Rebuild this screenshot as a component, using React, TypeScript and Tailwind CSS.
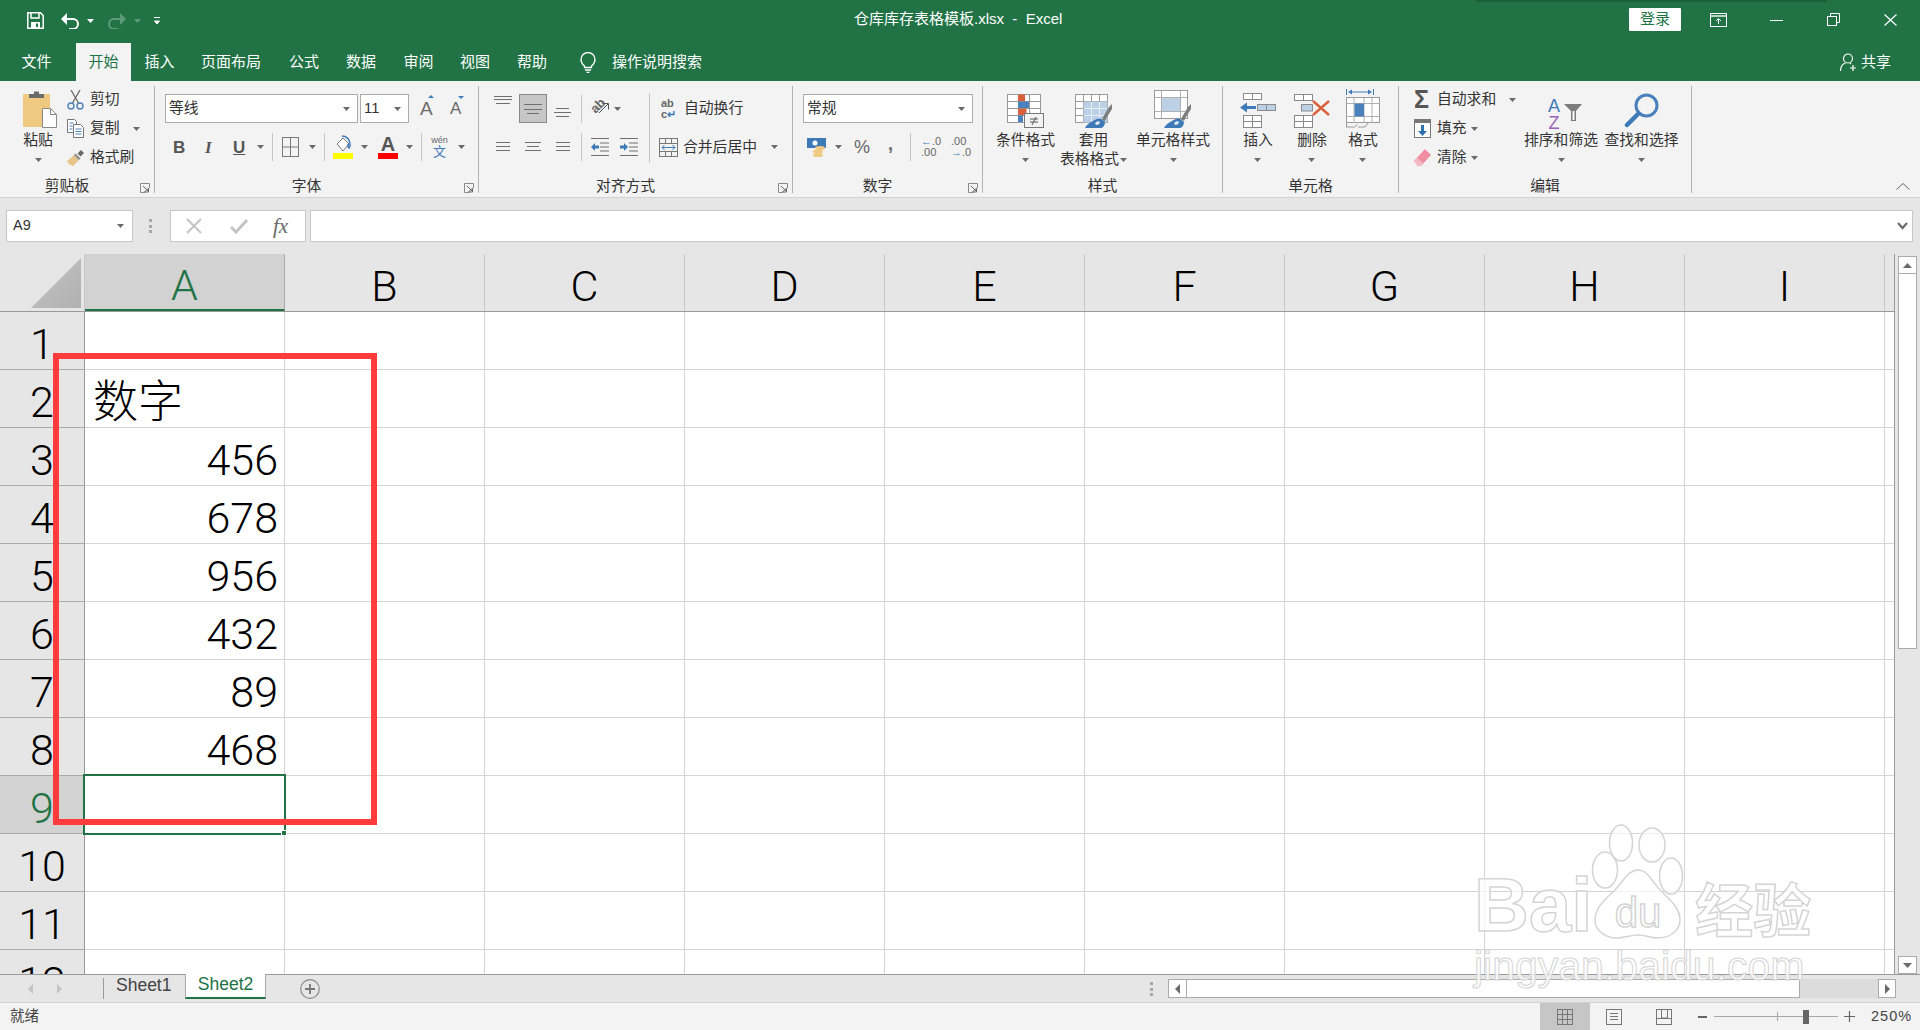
import type { ReactNode } from 'react';

const COLS = ['A', 'B', 'C', 'D', 'E', 'F', 'G', 'H', 'I', ''];
const ROWS: { n: number; text?: string; num?: string }[] = [
  { n: 1 },
  { n: 2, text: '数字' },
  { n: 3, num: '456' },
  { n: 4, num: '678' },
  { n: 5, num: '956' },
  { n: 6, num: '432' },
  { n: 7, num: '89' },
  { n: 8, num: '468' },
  { n: 9 },
  { n: 10 },
  { n: 11 },
  { n: 12 },
];
const TABS = ['文件', '开始', '插入', '页面布局', '公式', '数据', '审阅', '视图', '帮助'];
const TAB_CLASS = [
  'ml-[21px] w-[31px]',
  'ml-[24px] w-[55px] bg-[#f3f3f3] text-[#217346]',
  'ml-[14px] w-[29px]',
  'ml-[28px] w-[58px]',
  'ml-[29px] w-[30px]',
  'ml-[27px] w-[30px]',
  'ml-[28px] w-[29px]',
  'ml-[27px] w-[30px]',
  'ml-[28px] w-[28px]',
];

function Caret({ className = '' }: { className?: string }) {
  return (
    <svg width="7" height="4" viewBox="0 0 7 4" className={`shrink-0 ${className}`}>
      <path d="M0 0h7L3.5 4z" fill="#6a6a6a" />
    </svg>
  );
}

function Launcher() {
  return (
    <svg width="10" height="10" viewBox="0 0 10 10" className="absolute right-[4px] bottom-0">
      <path d="M9.5 5V.5H.5v9H5" fill="none" stroke="#8a8a8a" />
      <path d="M3 3l5 5M8.5 5v4h-4z" fill="none" stroke="#6a6a6a" />
    </svg>
  );
}

function Sep({ className = 'h-[28px]' }: { className?: string }) {
  return <div className={`w-px bg-[#c6c6c6] shrink-0 ${className}`} />;
}

function Group({ w, label, launcher, children }: { w: string; label: string; launcher?: boolean; children: ReactNode }) {
  return (
    <div className={`${w} shrink-0 h-[107px] border-r border-[#b4b4b4] flex flex-col`}>
      <div className="h-[92px]">{children}</div>
      <div className={`relative h-[15px] flex items-center justify-center text-[#333] ${launcher ? 'pr-[20px]' : ''}`}>
        <span className="mt-[2px]">{label}</span>
        {launcher && <Launcher />}
      </div>
    </div>
  );
}

function BigBtn({ icon, lines, className = '' }: { icon: ReactNode; lines: ReactNode; className?: string }) {
  return (
    <div className={`flex flex-col items-center shrink-0 ${className}`}>
      <div className="h-[42px] flex items-end justify-center">{icon}</div>
      <div className="mt-[3px] leading-[19px] text-[#333] whitespace-nowrap text-center flex flex-col items-center">{lines}</div>
    </div>
  );
}

function Select({ w, text }: { w: string; text: string }) {
  return (
    <div className={`${w} h-[29px] bg-white border border-[#ababab] flex items-center justify-between pl-[3px] pr-[7px] shrink-0 text-[#333]`}>
      <span>{text}</span>
      <Caret />
    </div>
  );
}

function Lines({ w, offs }: { w: number; offs: [number, number][] }) {
  return (
    <svg width={w} height="24" viewBox={`0 0 ${w} 24`} className="shrink-0">
      {offs.map(([x, y], i) => (
        <rect key={i} x={x} y={y} width={w - 2 * x} height="1" fill="#6f6f6f" />
      ))}
    </svg>
  );
}

function MiniGrid({ x, y, cols, rows, cw, ch, stroke = '#9a9a9a' }: { x: number; y: number; cols: number; rows: number; cw: number; ch: number; stroke?: string }) {
  const out = [];
  for (let r = 0; r < rows; r++) {
    for (let c = 0; c < cols; c++) {
      out.push(<rect key={`${r}-${c}`} x={x + c * cw + 0.5} y={y + r * ch + 0.5} width={cw} height={ch} fill="#fff" stroke={stroke} />);
    }
  }
  return <>{out}</>;
}

function PasteIcon() {
  return (
    <svg width="34" height="38" viewBox="0 0 34 38">
      <rect x="0" y="4" width="27" height="33" rx="1" fill="#f0c981" />
      <path d="M6 8V4h5V1.5h5V4h5v4z" fill="#6b6b6b" />
      <path d="M19.5 18.5h8l6 6v13h-14z" fill="#fff" stroke="#8a8a8a" />
      <path d="M27.5 18.5v6h6" fill="none" stroke="#8a8a8a" />
    </svg>
  );
}

function ScissorsIcon() {
  return (
    <svg width="17" height="20" viewBox="0 0 17 20" fill="none">
      <path d="M4 0l7.5 13M13 0L5.5 13" stroke="#6f6f6f" strokeWidth="1.4" />
      <circle cx="4" cy="16" r="3" stroke="#4d82b8" strokeWidth="1.4" />
      <circle cx="13" cy="16" r="3" stroke="#4d82b8" strokeWidth="1.4" />
    </svg>
  );
}

function CopyIcon() {
  return (
    <svg width="17" height="19" viewBox="0 0 17 19" fill="none">
      <path d="M.5.5h7l2 2v11H.5z" fill="#fff" stroke="#777" />
      <path d="M6.5 5.5h7l3 3v10h-10z" fill="#fff" stroke="#777" />
      <path d="M2.5 4h4M2.5 7h3M2.5 10h3M8.5 10h6M8.5 12.5h6M8.5 15h6" stroke="#4d82b8" />
    </svg>
  );
}

function BrushIcon() {
  return (
    <svg width="17" height="16" viewBox="0 0 17 16">
      <path d="M0 11l7-6 5 5-6 6c-2-1-4-1-6-5z" fill="#e6c48a" />
      <path d="M7 5l5 5 1.5-1.5-5-5z" fill="#8a8a8a" />
      <path d="M10.5 3.5L14 0l3 3-3.5 3.5z" fill="#6a6a6a" />
    </svg>
  );
}

function CondIcon() {
  return (
    <svg width="37" height="34" viewBox="0 0 37 34">
      <MiniGrid x={0} y={0} cols={3} rows={4} cw={11} ch={7} />
      <rect x="11" y="0.500" width="7" height="6.500" fill="#d9603b" />
      <rect x="11" y="7.500" width="11" height="6.500" fill="#4a80bc" />
      <rect x="11" y="14.500" width="8.500" height="6.500" fill="#d9603b" />
      <rect x="11" y="21.500" width="5" height="6.500" fill="#4a80bc" />
      <rect x="17.500" y="19.500" width="19" height="14" fill="#f3f3f3" stroke="#777" />
      <path d="M23 25h8M23 28h8M29 23l-4 8" stroke="#555" fill="none" />
    </svg>
  );
}

function Brush() {
  return (
    <>
      <path d="M27 26l1-3 6-10 3-3v5l-5 8-2 4z" fill="#7d7d7d" />
      <path d="M26 25l4 3c0 3-2 6-4 6H10c1-3 4-5 8-7 3-2 6-3 8-2z" fill="#3f7ab8" />
      <path d="M20 29c2-2 4-2 5-1 0 2-2 3-4 3z" fill="#dce7f3" />
    </>
  );
}

function TableIcon() {
  return (
    <svg width="37" height="34" viewBox="0 0 37 34">
      <MiniGrid x={0} y={0} cols={4} rows={4} cw={8} ch={7} />
      <rect x="8.500" y="7.500" width="24" height="21" fill="#bcd0e6" />
      <path d="M16.500 8v20M24.500 8v20M9 14.500h23M9 21.500h23" stroke="#e4ecf5" />
      <Brush />
    </svg>
  );
}

function StyleIcon() {
  return (
    <svg width="38" height="38" viewBox="0 0 38 38">
      <rect x="0.500" y="0.500" width="33" height="28" fill="#fff" stroke="#9a9a9a" />
      <path d="M7.500 1v27M26.500 1v27M1 7.500h32M1 21.500h32" stroke="#b0b0b0" />
      <rect x="8" y="8" width="18" height="13" fill="#bcd0e6" />
      <g transform="translate(0 4)"><Brush /></g>
    </svg>
  );
}

function InsertIcon() {
  return (
    <svg width="36" height="35" viewBox="0 0 36 35">
      <rect x="3.500" y="0.500" width="9" height="6" fill="#fff" stroke="#8a8a8a" />
      <rect x="12.500" y="0.500" width="9" height="6" fill="#fff" stroke="#8a8a8a" />
      <rect x="17.500" y="11.500" width="9" height="6" fill="#bcd0e6" stroke="#8a8a8a" />
      <rect x="26.500" y="11.500" width="9" height="6" fill="#bcd0e6" stroke="#8a8a8a" />
      <path d="M0 14.500l7-5v3.500h9v3H7v3.500z" fill="#3f7ab8" />
      <MiniGrid x={3} y={22} cols={2} rows={2} cw={9} ch={6} stroke="#8a8a8a" />
    </svg>
  );
}

function DeleteIcon() {
  return (
    <svg width="36" height="34" viewBox="0 0 36 34">
      <rect x="0.500" y="0.500" width="9" height="6" fill="#fff" stroke="#8a8a8a" />
      <rect x="9.500" y="0.500" width="9" height="6" fill="#fff" stroke="#8a8a8a" />
      <rect x="7.500" y="10.500" width="11" height="6.500" fill="#bcd0e6" stroke="#8a8a8a" />
      <MiniGrid x={0} y={21} cols={2} rows={2} cw={9} ch={6} stroke="#8a8a8a" />
      <path d="M19 7l16 14M35 7L19 21" stroke="#d9603b" strokeWidth="2.400" fill="none" />
    </svg>
  );
}

function FormatIcon() {
  return (
    <svg width="34" height="39" viewBox="0 0 34 39">
      <path d="M0.500 0v6M27.500 0v6M4 3h20" stroke="#3f7ab8" fill="none" />
      <path d="M2 3l4-2.500v5zM26 3l-4-2.500v5z" fill="#3f7ab8" />
      <rect x="0.500" y="8.500" width="33" height="25" fill="#fff" stroke="#9a9a9a" />
      <path d="M8 9v25M18 9v25M26 9v25M1 14.500h33M1 27.500h33" stroke="#b0b0b0" />
      <rect x="8.500" y="14.500" width="9.500" height="13" fill="#4a80bc" />
      <path d="M0.500 34v4h8l3-2.500M12 38h7l3-4" fill="none" stroke="#9a9a9a" />
    </svg>
  );
}

function FillDownIcon() {
  return (
    <svg width="17" height="19" viewBox="0 0 17 19">
      <rect x="0.500" y="0.500" width="16" height="18" fill="#fff" stroke="#777" />
      <rect x="1" y="1" width="15" height="3" fill="#777" />
      <path d="M7 6h3v6h3l-4.500 5L4 12h3z" fill="#2f6fb0" />
    </svg>
  );
}

function EraserIcon() {
  return (
    <svg width="17" height="17" viewBox="0 0 17 17">
      <path d="M0 12L11 0l6 6L7 17H4z" fill="#ee8ea0" />
      <path d="M0 12l3-3 6 5-2 3H4z" fill="#f5b8c4" />
    </svg>
  );
}

function SearchIcon() {
  return (
    <svg width="36" height="35" viewBox="0 0 36 35" fill="none">
      <circle cx="22.500" cy="12.500" r="10.500" stroke="#4a80bc" strokeWidth="3" />
      <path d="M14 21L3 32" stroke="#3f7ab8" strokeWidth="4.500" strokeLinecap="round" />
    </svg>
  );
}

function WindowIcons() {
  return (
    <div className="flex items-start ml-[29px]">
      <svg width="17" height="14" viewBox="0 0 17 14" className="mt-[13px]" fill="none" stroke="#fff">
        <rect x="0.500" y="0.500" width="16" height="13" strokeWidth="1" />
        <path d="M1 3h15" strokeWidth="1.400" />
        <path d="M8.500 11V6M6 8l2.500-2.500L11 8" />
      </svg>
      <div className="ml-[43px] mt-[20px] w-[13px] h-px bg-white" />
      <svg width="13" height="13" viewBox="0 0 13 13" className="ml-[44px] mt-[13px]" fill="none" stroke="#fff">
        <rect x="0.500" y="3.500" width="9" height="9" />
        <path d="M3.500 3V.5h9v9H10" />
      </svg>
      <svg width="13" height="12" viewBox="0 0 13 12" className="ml-[44px] mt-[14px]" fill="none" stroke="#fff" strokeWidth="1.200">
        <path d="M.5.5l12 11M12.500.5L.5 11.500" />
      </svg>
    </div>
  );
}

function TitleBar() {
  return (
    <div className="h-[43px] flex relative text-white shrink-0">
      <div className="absolute right-[93px] top-0 w-[351px] h-[2px] bg-[#1b5e3a]" />
      <svg width="17" height="17" viewBox="0 0 17 17" className="ml-[27px] mt-[12px]" fill="none" stroke="#fff" strokeWidth="1.500">
        <path d="M.8.8h12.700l2.700 2.700v12.700H.8z" />
        <path d="M4 1v5h8V1" />
        <rect x="4" y="10" width="9" height="6" fill="#fff" stroke="none" />
        <rect x="9" y="11.500" width="2" height="3.500" fill="#217346" stroke="none" />
      </svg>
      <svg width="19" height="16" viewBox="0 0 19 16" className="ml-[17px] mt-[13px]" fill="none">
        <path d="M4 6h8a5 5 0 0 1 0 10H8" stroke="#fff" strokeWidth="2" />
        <path d="M0 6l6-6v12z" fill="#fff" />
      </svg>
      <svg width="7" height="4" viewBox="0 0 7 4" className="ml-[7px] mt-[19px]"><path d="M0 0h7L3.500 4z" fill="#fff" /></svg>
      <svg width="18" height="16" viewBox="0 0 18 16" className="ml-[14px] mt-[13px]" fill="none">
        <path d="M14 6H6a5 5 0 0 0 0 10h4" stroke="#5d9a7a" strokeWidth="2" />
        <path d="M18 6l-6-6v12z" fill="#5d9a7a" />
      </svg>
      <svg width="7" height="4" viewBox="0 0 7 4" className="ml-[8px] mt-[19px]"><path d="M0 0h7L3.500 4z" fill="#5d9a7a" /></svg>
      <svg width="6" height="8" viewBox="0 0 6 8" className="ml-[13px] mt-[17px]"><path d="M0 .5h6M.5 4h5L3 7z" stroke="#fff" strokeWidth="1" fill="#fff" /></svg>
      <div className="absolute left-[854px] top-[10px] text-[15px] leading-[18px] whitespace-pre">仓库库存表格模板.xlsx  -  Excel</div>
      <div className="ml-auto flex items-start pr-[23px]">
        <div className="w-[52px] h-[23px] mt-[8px] bg-white text-[#217346] flex items-center justify-center text-[15px] rounded-[1px]">登录</div>
        <WindowIcons />
      </div>
    </div>
  );
}

function TabBar() {
  return (
    <div className="h-[38px] flex text-white shrink-0 text-[15px]">
      {TABS.map((t, i) => (
        <div key={t} className={`flex items-center justify-center whitespace-nowrap ${TAB_CLASS[i]}`}>{t}</div>
      ))}
      <svg width="16" height="21" viewBox="0 0 16 21" className="ml-[34px] mt-[9px]" fill="none" stroke="#fff" strokeWidth="1.300">
        <path d="M4.500 14C2 12 1 10 1 7.500a7 7 0 0 1 14 0C15 10 14 12 11.500 14v1.500h-7z" />
        <path d="M5 18h6M6.500 20.500h3" />
      </svg>
      <div className="ml-[16px] flex items-center whitespace-nowrap">操作说明搜索</div>
      <div className="ml-auto pr-[29px] flex items-center">
        <svg width="18" height="18" viewBox="0 0 18 18" fill="none" stroke="#fff" strokeWidth="1.200">
          <circle cx="8" cy="5.500" r="4.500" />
          <path d="M.5 18c0-4 2-7 5-8M10 10l1 1M13 12v6M10 15h6" />
        </svg>
        <span className="ml-[3px]">共享</span>
      </div>
    </div>
  );
}

function ClipboardGroup() {
  const items = [
    { icon: <ScissorsIcon />, text: '剪切', caret: false },
    { icon: <CopyIcon />, text: '复制', caret: true },
    { icon: <BrushIcon />, text: '格式刷', caret: false },
  ];
  return (
    <Group w="w-[155px]" label="剪贴板" launcher>
      <div className="flex">
        <div className="ml-[20px] w-[36px] flex flex-col items-center">
          <div className="mt-[4px] ml-[3px]"><PasteIcon /></div>
          <div className="mt-[3px] leading-[19px] text-[#333] whitespace-nowrap">粘贴</div>
          <Caret className="mt-[8px]" />
        </div>
        <div className="ml-[11px] -mt-[1px]">
          {items.map((it) => (
            <div key={it.text} className="h-[29px] flex items-center text-[#333]">
              <div className="w-[23px]">{it.icon}</div>
              <span className="whitespace-nowrap">{it.text}</span>
              {it.caret && <Caret className="ml-[13px]" />}
            </div>
          ))}
        </div>
      </div>
    </Group>
  );
}

function FontGroup() {
  return (
    <Group w="w-[324px]" label="字体" launcher>
      <div className="flex items-center h-[29px] mt-[8px]">
        <Select w="w-[193px] ml-[10px]" text="等线" />
        <Select w="w-[49px] ml-[2px]" text="11" />
        <div className="ml-[11px] w-[14px] relative text-[#6a6a6a] text-[19px] leading-none">A<span className="absolute -top-[4px] right-0 w-0 h-0 border-x-[3px] border-x-transparent border-b-[3px] border-b-[#3f7ab8]" /></div>
        <div className="ml-[16px] w-[14px] relative text-[#6a6a6a] text-[17px] leading-none">A<span className="absolute -top-[4px] right-0 w-0 h-0 border-x-[3px] border-x-transparent border-t-[3px] border-t-[#3f7ab8]" /></div>
      </div>
      <div className="flex items-center h-[30px] mt-[9px] text-[#555]">
        <span className="ml-[18px] w-[10px] text-[17px] font-bold leading-none">B</span>
        <span className="ml-[22px] w-[8px] text-[17px] italic font-bold font-['Liberation_Serif',serif] leading-none">I</span>
        <span className="ml-[20px] w-[11px] text-[17px] font-bold underline leading-none">U</span>
        <Caret className="ml-[13px]" />
        <Sep className="ml-[8px] h-[28px]" />
        <svg width="17" height="20" viewBox="0 0 17 20" className="ml-[9px]" fill="none" stroke="#7a7a7a">
          <rect x="0.500" y="0.500" width="16" height="19" />
          <path d="M8.500 1v18M1 10h15" />
        </svg>
        <Caret className="ml-[10px]" />
        <Sep className="ml-[8px] h-[28px]" />
        <svg width="20" height="24" viewBox="0 0 20 24" className="ml-[8px]">
          <path d="M4 9l6-6 6 6-6 7z" fill="#fff" stroke="#777" />
          <path d="M9 1c4 0 8 3 8 8 0 2 0 4-1 4-1 0-1-2-1-4" fill="none" stroke="#3f7ab8" strokeWidth="1.500" />
          <rect x="0" y="18" width="20" height="6" fill="#ffff00" />
        </svg>
        <Caret className="ml-[8px]" />
        <div className="ml-[10px] w-[20px] h-[24px] flex flex-col items-center">
          <span className="text-[20px] leading-[18px] font-bold text-[#555]">A</span>
          <div className="w-[20px] h-[6px] bg-[#ff0000]" />
        </div>
        <Caret className="ml-[8px]" />
        <Sep className="ml-[8px] h-[28px]" />
        <div className="ml-[10px] w-[15px] flex flex-col items-center leading-none">
          <span className="text-[9px] text-[#666]">wén</span>
          <span className="text-[13px] text-[#3f7ab8]">文</span>
        </div>
        <Caret className="ml-[11px]" />
      </div>
    </Group>
  );
}

function AlignGroup() {
  return (
    <Group w="w-[314px]" label="对齐方式" launcher>
      <div className="flex items-center h-[29px] mt-[8px]">
        <div className="ml-[15px] w-[18px] -mt-[11px]"><Lines w={18} offs={[[0, 5], [0, 8], [2, 12]]} /></div>
        <div className="ml-[7px] w-[28px] h-[29px] bg-[#c6c6c6] border border-[#8a8a8a] flex items-center justify-center"><Lines w={18} offs={[[0, 7], [0, 12], [3, 16]]} /></div>
        <div className="ml-[7px] w-[17px] mt-[6px]"><Lines w={17} offs={[[2, 8], [0, 12], [2, 16]]} /></div>
        <Sep className="ml-[10px] h-[28px]" />
        <div className="ml-[8px] w-[20px] h-[20px] relative text-[#666]">
          <span className="absolute left-0 top-0 text-[13px] leading-none font-bold -rotate-45">ab</span>
          <svg width="12" height="12" viewBox="0 0 12 12" className="absolute right-0 top-[3px]" fill="none" stroke="#555"><path d="M1 11L10 2M4.500 1.500H10.500V7.500" /></svg>
        </div>
        <Caret className="ml-[4px]" />
        <Sep className="ml-[28px] h-[38px] mt-[7px]" />
        <div className="ml-[11px] w-[17px] text-[11px] leading-[11px] font-bold text-[#666]">ab<br />c<span className="text-[#3f7ab8]">↵</span></div>
        <span className="ml-[6px] text-[#333] whitespace-nowrap">自动换行</span>
      </div>
      <div className="flex items-center h-[30px] mt-[9px]">
        <div className="ml-[17px] w-[14px]"><Lines w={14} offs={[[0, 7], [0, 11], [0, 15]]} /></div>
        <div className="ml-[15px] w-[16px]"><Lines w={16} offs={[[0, 7], [2, 11], [0, 15]]} /></div>
        <div className="ml-[15px] w-[14px]"><Lines w={14} offs={[[0, 7], [0, 11], [0, 15]]} /></div>
        <Sep className="ml-[11px] h-[28px]" />
        <svg width="18" height="18" viewBox="0 0 18 18" className="ml-[9px]" fill="none">
          <path d="M0 .5h18M9 5h9M9 9h9M9 13h9M0 17.500h18" stroke="#6f6f6f" />
          <path d="M0 9l4-4v2.500h4v3H4V13z" fill="#3f7ab8" />
        </svg>
        <svg width="18" height="18" viewBox="0 0 18 18" className="ml-[11px]" fill="none">
          <path d="M0 .5h18M9 5h9M9 9h9M9 13h9M0 17.500h18" stroke="#6f6f6f" />
          <path d="M8 9L4 5v2.500H0v3h4V13z" fill="#3f7ab8" />
        </svg>
        <Sep className="ml-[11px] h-[32px]" />
        <svg width="19" height="19" viewBox="0 0 19 19" className="ml-[9px]" fill="none">
          <rect x="0.500" y="0.500" width="18" height="18" stroke="#777" />
          <path d="M1 5.500h17M1 13.500h17M6.500 1v4.500M12.500 1v4.500M6.500 14v4.500M12.500 14v4.500" stroke="#777" />
          <path d="M3 9.500h13M5.500 7l-2.500 2.500L5.500 12M13.500 7l2.500 2.500-2.500 2.500" stroke="#3f7ab8" />
        </svg>
        <span className="ml-[5px] w-[75px] text-[#333] whitespace-nowrap">合并后居中</span>
        <Caret className="ml-[13px]" />
      </div>
    </Group>
  );
}

function NumberGroup() {
  return (
    <Group w="w-[190px]" label="数字" launcher>
      <div className="flex items-center h-[29px] mt-[8px]">
        <Select w="w-[170px] ml-[10px]" text="常规" />
      </div>
      <div className="flex items-center h-[30px] mt-[9px]">
        <svg width="19" height="19" viewBox="0 0 19 19" className="ml-[14px]">
          <rect x="0" y="0" width="19" height="10" fill="#3f7ab8" />
          <circle cx="8" cy="5" r="2.500" fill="#fff" />
          <ellipse cx="13" cy="10" rx="5" ry="2" fill="#f0c981" />
          <ellipse cx="11" cy="13.500" rx="5" ry="2" fill="#f0c981" />
          <ellipse cx="11" cy="17" rx="5" ry="2" fill="#f0c981" />
        </svg>
        <Caret className="ml-[9px]" />
        <span className="ml-[12px] w-[15px] text-[18px] leading-none text-[#666]">%</span>
        <span className="ml-[19px] w-[6px] text-[18px] leading-none font-bold text-[#666] -mt-[6px]">,</span>
        <Sep className="ml-[16px] h-[28px]" />
        <div className="ml-[10px] w-[16px] text-[11px] leading-[11px] text-[#666] whitespace-nowrap"><span className="text-[#3f7ab8] font-bold">←</span>.0<br />.00</div>
        <div className="ml-[14px] w-[16px] text-[11px] leading-[11px] text-[#666] whitespace-nowrap">.00<br /><span className="text-[#3f7ab8] font-bold">→</span>.0</div>
      </div>
    </Group>
  );
}

function StylesGroup() {
  return (
    <Group w="w-[240px]" label="样式">
      <div className="flex">
        <BigBtn className="ml-[12px] w-[61px]" icon={<CondIcon />} lines={<><span>条件格式</span><span className="h-[19px] flex items-center"><Caret /></span></>} />
        <BigBtn className="ml-[4px] w-[67px]" icon={<TableIcon />} lines={<><span>套用</span><span className="flex items-center">表格格式<Caret className="ml-[1px]" /></span></>} />
        <BigBtn className="ml-[9px] w-[74px]" icon={<StyleIcon />} lines={<><span>单元格样式</span><span className="h-[19px] flex items-center"><Caret /></span></>} />
      </div>
    </Group>
  );
}

function CellsGroup() {
  return (
    <Group w="w-[176px]" label="单元格">
      <div className="flex">
        <BigBtn className="ml-[15px] w-[40px]" icon={<InsertIcon />} lines={<><span>插入</span><span className="h-[19px] flex items-center"><Caret /></span></>} />
        <BigBtn className="ml-[14px] w-[40px]" icon={<DeleteIcon />} lines={<><span>删除</span><span className="h-[19px] flex items-center"><Caret /></span></>} />
        <BigBtn className="ml-[11px] w-[40px]" icon={<FormatIcon />} lines={<><span>格式</span><span className="h-[19px] flex items-center"><Caret /></span></>} />
      </div>
    </Group>
  );
}

function EditGroup() {
  return (
    <Group w="w-[293px]" label="编辑">
      <div className="flex">
        <div className="ml-[15px] w-[104px] -mt-[1px] text-[#333]">
          <div className="h-[29px] flex items-center">
            <span className="w-[23px] text-[25px] leading-none font-bold text-[#555]">Σ</span>
            <span className="whitespace-nowrap">自动求和</span>
            <Caret className="ml-[13px]" />
          </div>
          <div className="h-[29px] flex items-center">
            <div className="w-[23px]"><FillDownIcon /></div>
            <span className="whitespace-nowrap">填充</span>
            <Caret className="ml-[4px]" />
          </div>
          <div className="h-[29px] flex items-center">
            <div className="w-[23px]"><EraserIcon /></div>
            <span className="whitespace-nowrap">清除</span>
            <Caret className="ml-[4px]" />
          </div>
        </div>
        <BigBtn
          className="ml-[6px] w-[74px]"
          icon={
            <div className="flex items-center -mb-[4px] ml-[8px]">
              <div className="flex flex-col items-center text-[18px] leading-[17px] mr-[4px]">
                <span className="text-[#3f7ab8]">A</span>
                <span className="text-[#9a62b8]">Z</span>
              </div>
              <svg width="18" height="17" viewBox="0 0 18 17" className="-mt-[6px]"><path d="M0 0h18l-6 7v10H7V7z" fill="#7d7d7d" /><path d="M8.500 7h2v9h-2z" fill="#fff" /></svg>
            </div>
          }
          lines={<><span>排序和筛选</span><span className="h-[19px] flex items-center"><Caret /></span></>}
        />
        <BigBtn className="ml-[6px] w-[75px]" icon={<SearchIcon />} lines={<><span>查找和选择</span><span className="h-[19px] flex items-center"><Caret /></span></>} />
      </div>
    </Group>
  );
}

function Ribbon() {
  return (
    <div className="h-[117px] bg-[#f3f3f3] border-b border-[#d2d2d2] flex pt-[5px] text-[14.800px] leading-[19px] relative shrink-0">
      <ClipboardGroup />
      <FontGroup />
      <AlignGroup />
      <NumberGroup />
      <StylesGroup />
      <CellsGroup />
      <EditGroup />
      <svg width="14" height="7" viewBox="0 0 14 7" className="absolute right-[10px] bottom-[7px]" fill="none" stroke="#666"><path d="M.5 6.500L7 .5l6.500 6" /></svg>
    </div>
  );
}

function FormulaBar() {
  return (
    <div className="h-[56px] bg-[#e6e6e6] flex pt-[12px] shrink-0">
      <div className="ml-[6px] w-[127px] h-[32px] bg-white border border-[#c6c6c6] flex items-center justify-between pl-[6px] pr-[8px] text-[14.500px] text-[#333]">
        A9
        <Caret />
      </div>
      <div className="ml-[16px] mt-[9px] w-[3px] h-[14px] flex flex-col justify-between">
        <div className="h-[3px] bg-[#a8a8a8]" />
        <div className="h-[3px] bg-[#a8a8a8]" />
        <div className="h-[3px] bg-[#a8a8a8]" />
      </div>
      <div className="ml-[18px] w-[136px] h-[32px] bg-white border border-[#c6c6c6] flex items-center">
        <svg width="16" height="16" viewBox="0 0 16 16" className="ml-[15px]" fill="none" stroke="#c4c4c4" strokeWidth="2"><path d="M1 1l14 14M15 1L1 15" /></svg>
        <svg width="18" height="16" viewBox="0 0 18 16" className="ml-[28px]" fill="none" stroke="#c4c4c4" strokeWidth="3"><path d="M1 9l5 5L17 2" /></svg>
        <span className="ml-[25px] text-[21px] italic font-['Liberation_Serif',serif] text-[#6a6a6a] leading-none">fx</span>
      </div>
      <div className="ml-[4px] w-[1603px] h-[32px] bg-white border border-[#c6c6c6] flex items-center justify-end pr-[4px]">
        <svg width="11" height="8" viewBox="0 0 11 8" fill="none" stroke="#6a6a6a" strokeWidth="2.200"><path d="M1 1l4.500 5L10 1" /></svg>
      </div>
    </div>
  );
}

function Sheet() {
  return (
    <div className="w-[1895px] h-[720px] overflow-hidden border-r border-[#9a9a9a] shrink-0 font-['Roboto','Noto_Sans_CJK_SC',sans-serif] font-light text-[43px] text-black">
      <div className="flex h-[58px] bg-[#e6e6e6] border-b border-[#9a9a9a]">
        <div className="w-[85px] shrink-0 border-r border-[#c8c8c8] flex items-end justify-end pr-[3px] pb-[3px]">
          <div className="w-[50px] h-[50px] bg-gradient-to-br from-[#c6c6c6] to-[#b0b0b0] [clip-path:polygon(100%_0,100%_100%,0_100%)]" />
        </div>
        {COLS.map((c) => (
          <div
            key={c}
            className={`w-[200px] shrink-0 border-r flex items-center justify-center pt-[7px] ${c === 'A' ? 'bg-[#d2d2d2] text-[#217346] border-[#ababab] border-b-2 border-b-[#217346]' : 'border-[#c8c8c8]'}`}
          >
            {c}
          </div>
        ))}
      </div>
      {ROWS.map((r) => (
        <div key={r.n} className="flex h-[58px] border-b border-[#d4d4d4]">
          <div className={`w-[85px] shrink-0 border-r border-r-[#9a9a9a] -mb-px border-b border-b-[#ababab] flex items-center justify-center pt-[7px] ${r.n === 9 ? 'bg-[#d2d2d2] text-[#217346]' : 'bg-[#e6e6e6]'}`}>
            {r.n}
          </div>
          {COLS.map((c, i) => (
            <div key={c} className={`w-[200px] shrink-0 border-r border-[#d4d4d4] flex items-center pt-[8px] ${i === 0 && r.num ? 'justify-end pr-[6px]' : 'pl-[8px]'}`}>
              {i === 0 && r.num}
              {i === 0 && r.text && <span className="text-[45px] leading-none">{r.text}</span>}
            </div>
          ))}
        </div>
      ))}
    </div>
  );
}

function ArrowBtn({ dir }: { dir: 'up' | 'down' }) {
  return (
    <div className="h-[18px] bg-white border border-[#ababab] flex items-center justify-center shrink-0">
      <svg width="9" height="5" viewBox="0 0 9 5"><path d={dir === 'up' ? 'M0 5h9L4.500 0z' : 'M0 0h9L4.500 5z'} fill="#6a6a6a" /></svg>
    </div>
  );
}

function VScroll() {
  return (
    <div className="flex-1 bg-[#e6e6e6] px-[3px] flex flex-col pt-[2px]">
      <ArrowBtn dir="up" />
      <div className="flex-1 flex flex-col">
        <div className="h-[375px] bg-white border border-[#ababab] border-t-0" />
      </div>
      <ArrowBtn dir="down" />
    </div>
  );
}

function SheetTabs() {
  return (
    <div className="h-[29px] bg-[#e6e6e6] border-t border-[#9a9a9a] border-b border-b-[#d2d2d2] flex items-start shrink-0">
      <svg width="5" height="10" viewBox="0 0 5 10" className="ml-[28px] mt-[9px]"><path d="M5 0v10L0 5z" fill="#c4c4c4" /></svg>
      <svg width="5" height="10" viewBox="0 0 5 10" className="ml-[24px] mt-[9px]"><path d="M0 0v10l5-5z" fill="#c4c4c4" /></svg>
      <div className="ml-[41px] mt-[3px] w-px h-[21px] bg-[#9a9a9a]" />
      <div className="ml-[12px] w-[69px] h-[25px] text-[17.500px] text-[#444] leading-[20px]">Sheet1</div>
      <div className="w-[81px] h-[25px] bg-white border-x border-[#ababab] border-b-2 border-b-[#217346] -mt-px text-[17.500px] text-[#217346] flex items-start justify-center leading-[21px]">Sheet2</div>
      <svg width="20" height="20" viewBox="0 0 20 20" className="ml-[34px] mt-[4px]" fill="none" stroke="#8a8a8a" strokeWidth="1.200">
        <circle cx="10" cy="10" r="9.300" />
        <path d="M10 5v10M5 10h10" strokeWidth="1.800" stroke="#777" />
      </svg>
      <div className="ml-[830px] mt-[7px] w-[3px] h-[14px] flex flex-col justify-between">
        <div className="h-[3px] bg-[#a8a8a8]" />
        <div className="h-[3px] bg-[#a8a8a8]" />
        <div className="h-[3px] bg-[#a8a8a8]" />
      </div>
      <div className="ml-[15px] mt-[4px] w-[728px] h-[19px] bg-[#dcdcdc] flex">
        <div className="w-[19px] h-full bg-white border border-[#ababab] flex items-center justify-center">
          <svg width="5" height="10" viewBox="0 0 5 10"><path d="M5 0v10L0 5z" fill="#6a6a6a" /></svg>
        </div>
        <div className="w-[613px] h-full bg-white border border-l-0 border-[#ababab]" />
        <div className="ml-auto w-[18px] h-full bg-white border border-[#ababab] flex items-center justify-center">
          <svg width="5" height="10" viewBox="0 0 5 10"><path d="M0 0v10l5-5z" fill="#6a6a6a" /></svg>
        </div>
      </div>
    </div>
  );
}

function StatusBar() {
  return (
    <div className="h-[27px] bg-[#f3f3f3] flex items-center shrink-0 text-[14.500px] text-[#444]">
      <span className="ml-[10px] w-[30px] shrink-0">就绪</span>
      <div className="ml-[1500px] w-[50px] h-full bg-[#c6c6c6] flex items-center justify-center">
        <svg width="16" height="16" viewBox="0 0 16 16" fill="none" stroke="#777"><rect x="0.500" y="0.500" width="15" height="15" /><path d="M5.500 1v15M10.500 1v15M1 5.500h15M1 10.500h15" /></svg>
      </div>
      <svg width="16" height="16" viewBox="0 0 16 16" className="ml-[16px]" fill="none" stroke="#777"><rect x="0.500" y="0.500" width="15" height="15" /><path d="M4 4.500h8M4 7.500h8M4 10.500h8" /></svg>
      <svg width="16" height="16" viewBox="0 0 16 16" className="ml-[34px]" fill="none" stroke="#777"><rect x="0.500" y="0.500" width="15" height="15" /><path d="M5.500 1v8h6V1M1 9.500h15" /></svg>
      <div className="ml-[26px] w-[9px] h-[2px] bg-[#666]" />
      <div className="ml-[7px] w-[124px] h-px bg-[#a8a8a8] relative flex items-center">
        <div className="ml-[63px] w-px h-[9px] bg-[#a8a8a8]" />
        <div className="ml-[25px] w-[6px] h-[14px] bg-[#666]" />
      </div>
      <svg width="11" height="11" viewBox="0 0 11 11" className="ml-[6px]" fill="none" stroke="#666" strokeWidth="1.200"><path d="M5.500 0v11M0 5.500h11" /></svg>
      <span className="ml-[16px] tracking-[1px]">250%</span>
    </div>
  );
}

function Watermark() {
  const outlined = 'text-white/75 [-webkit-text-stroke:1.500px_#d4d4d4] font-bold whitespace-nowrap';
  return (
    <div className="absolute left-[1474px] top-[820px] w-[350px] pointer-events-none font-['Liberation_Sans','Noto_Sans_CJK_SC',sans-serif]">
      <div className="flex items-end h-[119px]">
        <span className={`${outlined} text-[76px] leading-[72px] -mb-[2px]`}>Bai</span>
        <svg width="106" height="115" viewBox="0 0 106 115" className="-ml-[4px] shrink-0" fill="#ffffffb0" stroke="#d4d4d4" strokeWidth="1.500">
          <ellipse cx="17" cy="46" rx="12.500" ry="18" />
          <ellipse cx="33" cy="19" rx="11.500" ry="18" />
          <ellipse cx="64" cy="21" rx="13" ry="17" />
          <ellipse cx="83" cy="52" rx="11.500" ry="18" />
          <path d="M50 46c10 0 14 12 24 22 8 8 18 16 18 28 0 12-12 18-22 18-8 0-12-3-20-3s-13 3-21 3C18 114 7 107 7 96c0-12 10-21 18-28 10-10 15-22 25-22z" />
          <text x="50" y="103" textAnchor="middle" fontSize="42" fontWeight="400">du</text>
        </svg>
        <span className={`${outlined} text-[58px] leading-[60px] -mb-[3px] ml-[1px]`}>经验</span>
      </div>
      <div className="mt-[5px] text-[41px] leading-[44px] whitespace-nowrap text-white/75 [-webkit-text-stroke:1px_#d4d4d4]">jingyan.baidu.com</div>
    </div>
  );
}

export default function App() {
  return (
    <div className="relative w-[1920px] h-[1030px] overflow-hidden flex flex-col bg-white font-['Liberation_Sans','Noto_Sans_CJK_SC',sans-serif]">
      <div className="bg-[#217346] shrink-0">
        <TitleBar />
        <TabBar />
      </div>
      <Ribbon />
      <FormulaBar />
      <div className="flex h-[720px] shrink-0">
        <Sheet />
        <VScroll />
      </div>
      <SheetTabs />
      <StatusBar />

      {/* selected cell */}
      <div className="absolute left-[83px] top-[774px] w-[203px] h-[61px] border-2 border-[#217346]">
        <div className="absolute -right-[3px] -bottom-[3px] w-[6px] h-[6px] bg-[#217346] border border-white" />
      </div>
      {/* red highlight box */}
      <div className="absolute left-[53px] top-[353px] w-[324px] h-[472px] border-[6.500px] border-[#ff3b3b]" />
      <Watermark />
    </div>
  );
}
